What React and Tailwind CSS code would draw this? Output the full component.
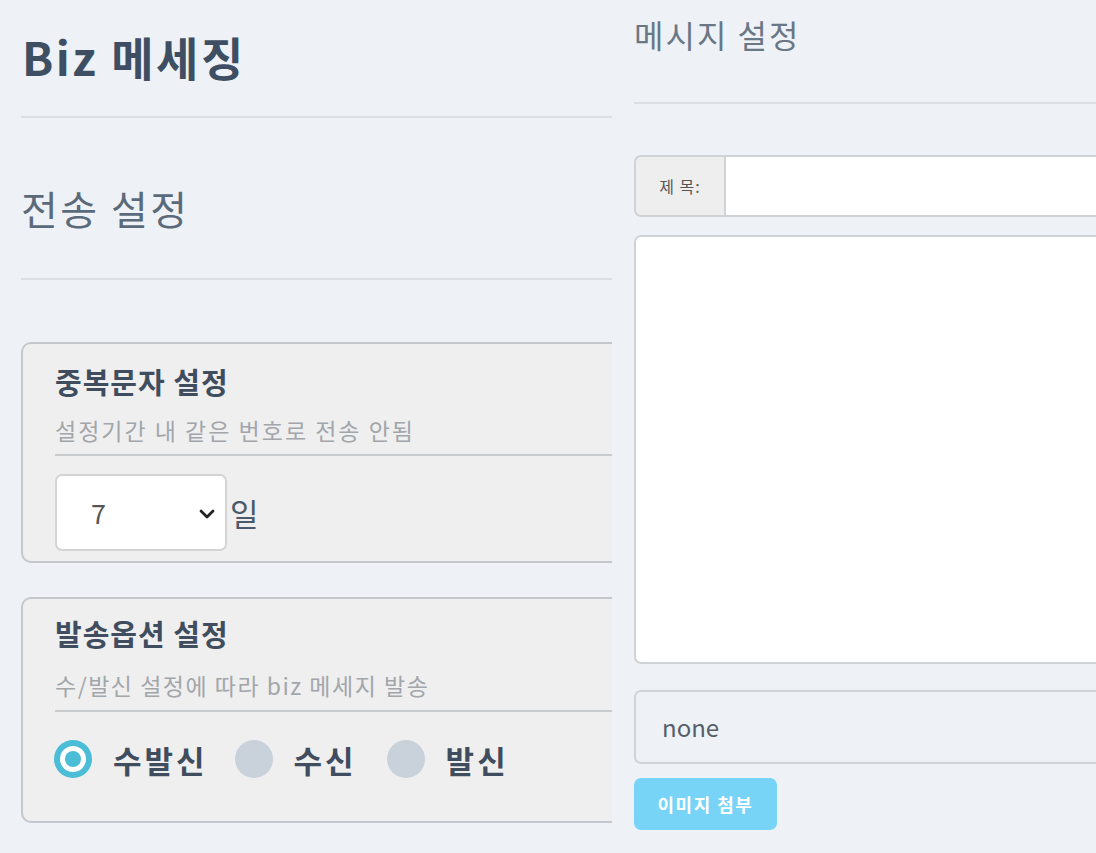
import React from "react";

const font = { fontFamily: '"Noto Sans CJK KR", "Noto Sans", sans-serif' };

function Radio({ checked, label }) {
  return (
    <label className="flex items-center gap-[21px]">
      {checked ? (
        <span className="w-[38px] h-[38px] rounded-full bg-[#4bbdd6] flex items-center justify-center">
          <span className="w-[26px] h-[26px] rounded-full bg-white flex items-center justify-center">
            <span className="w-[16px] h-[16px] rounded-full bg-[#4bbdd6]" />
          </span>
        </span>
      ) : (
        <span className="w-[38px] h-[38px] rounded-full bg-[#c9d1db]" />
      )}
      <span className="text-[31px] font-semibold tracking-[3px] text-[#3f4d5e] leading-none">{label}</span>
    </label>
  );
}

export default function App() {
  return (
    <div className="w-[1096px] h-[853px] bg-[#eef2f6] flex overflow-hidden" style={font}>
      {/* Left column */}
      <div className="w-[612px] shrink-0 overflow-hidden pl-[21px]">
        <div className="w-[700px]">
          <div className="h-[116px] flex items-center">
            <h1 className="text-[46px] font-semibold tracking-[2.5px] text-[#3e4f63] leading-none -mt-[4px] pl-[1px]">Biz 메세징</h1>
          </div>
          <div className="h-[2px] bg-[#dadfe5]" />
          <div className="h-[160px] flex items-center">
            <h2 className="text-[40px] font-normal tracking-[2.5px] text-[#5b6a7a] leading-none mt-[20px]">전송 설정</h2>
          </div>
          <div className="h-[2px] bg-[#dadfe5]" />

          <div className="mt-[62px] h-[221px] rounded-[10px] border-2 border-[#c4c8cd] bg-[#efefef] pl-[32px] pt-[17px]">
            <div className="text-[29px] font-semibold tracking-[1px] text-[#3f4d5e] leading-[40px]">중복문자 설정</div>
            <div className="mt-[14px] text-[23px] tracking-[2px] text-[#a2a6ab] leading-[30px]">설정기간 내 같은 번호로 전송 안됨</div>
            <div className="mt-[9px] h-[2px] bg-[#c9cccf]" />
            <div className="mt-[18px] flex items-center">
              <div className="w-[172px] h-[77px] rounded-[7px] border-2 border-[#d4d4d4] bg-white flex items-center justify-between pl-[34px] pr-[10px]">
                <span className="text-[27px] text-[#555] leading-none">7</span>
                <svg width="16" height="12" viewBox="0 0 16 12" className="mt-[2px]">
                  <path d="M2 3 L8 9 L14 3" fill="none" stroke="#222" strokeWidth="2.8" strokeLinecap="round" strokeLinejoin="round" />
                </svg>
              </div>
              <span className="ml-[3px] text-[31px] text-[#4a5a6b] leading-none">일</span>
            </div>
          </div>

          <div className="mt-[34px] h-[226px] rounded-[10px] border-2 border-[#c4c8cd] bg-[#efefef] pl-[32px] pt-[14px]">
            <div className="text-[29px] font-semibold tracking-[1px] text-[#3f4d5e] leading-[40px]">발송옵션 설정</div>
            <div className="mt-[17px] text-[23px] tracking-[1.5px] text-[#a2a6ab] leading-[30px]">수/발신 설정에 따라 biz 메세지 발송</div>
            <div className="mt-[10px] h-[2px] bg-[#c9cccf]" />
            <div className="mt-[28px] flex items-center -ml-[1px]">
              <Radio checked label="수발신" />
              <span className="w-[27px]" />
              <Radio label="수신" />
              <span className="w-[30px]" />
              <Radio label="발신" />
            </div>
          </div>
        </div>
      </div>

      {/* Right column */}
      <div className="flex-1 min-w-0 overflow-hidden pl-[22px]">
        <div className="w-[640px]">
          <div className="h-[102px] pt-[14px]">
            <h2 className="text-[32px] font-normal tracking-[2px] text-[#6a7785] leading-[40px]">메시지 설정</h2>
          </div>
          <div className="h-[2px] bg-[#dadfe5]" />

          <div className="mt-[51px] flex h-[62px]">
            <div className="w-[92px] h-full bg-[#eeeeee] border-2 border-[#d0d3d6] rounded-l-[7px] flex items-center justify-center">
              <span className="text-[16px] tracking-[1px] text-[#555] leading-none">제 목:</span>
            </div>
            <div className="flex-1 h-full bg-white border-2 border-l-0 border-[#d0d3d6]" />
          </div>

          <div className="mt-[18px] h-[429px] bg-white border-2 border-[#d0d3d6] rounded-[7px]" />

          <div className="mt-[26px] h-[74px] border-2 border-[#d0d3d6] rounded-[7px] flex items-center pl-[26px]">
            <span className="text-[24px] text-[#555e69] leading-none">none</span>
          </div>

          <button className="mt-[14px] w-[143px] h-[52px] rounded-[7px] bg-[#77d4f6] text-white text-[18px] font-semibold tracking-[1.5px] flex items-center justify-center">
            이미지 첨부
          </button>
        </div>
      </div>
    </div>
  );
}
